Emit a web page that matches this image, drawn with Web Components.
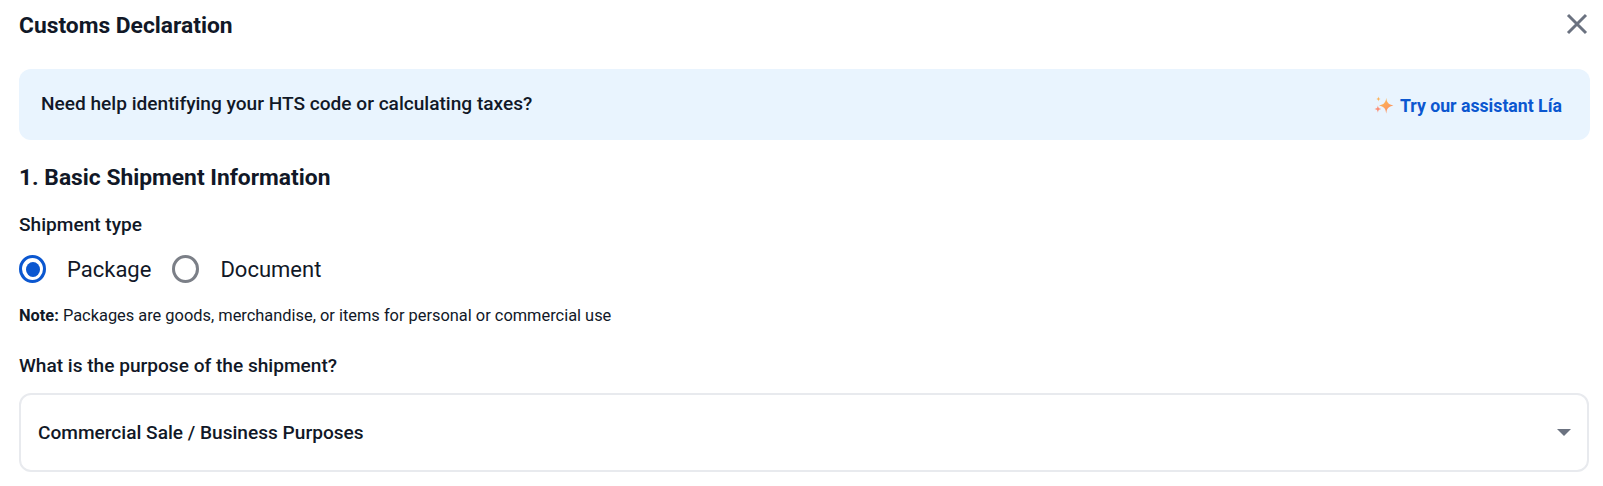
<!DOCTYPE html>
<html>
<head>
<meta charset="utf-8">
<style>
html, body { margin: 0; background: #fff; }
body { font-family: Roboto, "Liberation Sans", sans-serif; color: #111827; overflow: hidden; }
</style>
</head>
<body>
<customs-dialog>
    <dialog-header>Customs Declaration</dialog-header>
    <help-banner>Need help identifying your HTS code or calculating taxes?</help-banner>
    <section-title>1. Basic Shipment Information</section-title>
    <field-label>Shipment type</field-label>
    <radio-group>
        <radio-option checked>Package</radio-option>
        <radio-option>Document</radio-option>
    </radio-group>
    <shipment-note><b>Note:</b> Packages are goods, merchandise, or items for personal or commercial use</shipment-note>
    <field-label style="--label-top: 29px">What is the purpose of the shipment?</field-label>
    <select-box>Commercial Sale / Business Purposes</select-box>
</customs-dialog>

<script>
class CustomsDialog extends HTMLElement {
    constructor() {
        super();
        this.attachShadow({ mode: 'open' }).innerHTML = `
        <style>
        :host { display: flex; flex-direction: column; padding: 0 13px 0 19px; height: 486px; box-sizing: border-box; }
        </style>
        <slot></slot>`;
    }
}

class DialogHeader extends HTMLElement {
    constructor() {
        super();
        this.attachShadow({ mode: 'open' }).innerHTML = `
        <style>
        :host { display: flex; justify-content: space-between; align-items: center; height: 50px; margin-bottom: 19px; }
        h1 { margin: 0; font-size: 22.8px; font-weight: 700; color: #111827; }
        svg { display: block; margin-right: 2px; margin-top: -2px; }
        </style>
        <h1><slot></slot></h1>
        <svg width="22" height="22" viewBox="0 0 22 22" fill="none" stroke="#6b7280" stroke-width="3">
            <path d="M2 2 L20 20 M20 2 L2 20"/>
        </svg>`;
    }
}

class HelpBanner extends HTMLElement {
    constructor() {
        super();
        this.attachShadow({ mode: 'open' }).innerHTML = `
        <style>
        :host { display: flex; justify-content: space-between; align-items: center; height: 71px; padding: 0 28px 0 22px; background: #e9f4fe; border-radius: 12px; box-sizing: border-box; }
        .text { font-size: 19.1px; font-weight: 500; color: #111827; margin-top: -3px; }
        a { display: flex; align-items: center; gap: 6px; font-size: 17.7px; font-weight: 700; color: #0b57d0; text-decoration: none; margin-top: 2px; }
        svg { display: block; }
        </style>
        <span class="text"><slot></slot></span>
        <a href="#">
            <svg width="20" height="20" viewBox="0 0 18 18">
                <defs>
                    <linearGradient id="spark" x1="0" y1="0" x2="0.6" y2="1">
                        <stop offset="0" stop-color="#fdc04a"/>
                        <stop offset="1" stop-color="#fb8f68"/>
                    </linearGradient>
                </defs>
                <path fill="url(#spark)" d="M11 1.5 C11.5 6 13 7.5 17.5 8.5 C13 9.5 11.5 11 11 16 C10.5 11 9 9.5 4.5 8.5 C9 7.5 10.5 6 11 1.5Z"/>
                <path fill="#fbb45c" d="M4 0.5 C4.2 2 4.7 2.5 6 2.8 C4.7 3.1 4.2 3.6 4 5 C3.8 3.6 3.3 3.1 2 2.8 C3.3 2.5 3.8 2 4 0.5Z"/>
                <path fill="#fb8f78" d="M3.5 8.5 C3.8 10.6 4.4 11.2 6.5 11.7 C4.4 12.2 3.8 12.8 3.5 15 C3.2 12.8 2.6 12.2 0.5 11.7 C2.6 11.2 3.2 10.6 3.5 8.5Z"/>
            </svg>
            <span>Try our assistant Lía</span>
        </a>`;
    }
}

class SectionTitle extends HTMLElement {
    constructor() {
        super();
        this.attachShadow({ mode: 'open' }).innerHTML = `
        <style>
        :host { display: block; margin-top: 24px; font-size: 22.8px; font-weight: 700; line-height: 28px; color: #111827; }
        </style>
        <slot></slot>`;
    }
}

class FieldLabel extends HTMLElement {
    constructor() {
        super();
        this.attachShadow({ mode: 'open' }).innerHTML = `
        <style>
        :host { display: block; margin-top: var(--label-top, 22px); font-size: 19.1px; font-weight: 500; line-height: 22px; color: #111827; }
        </style>
        <slot></slot>`;
    }
}

class RadioGroup extends HTMLElement {
    constructor() {
        super();
        this.attachShadow({ mode: 'open' }).innerHTML = `
        <style>
        :host { display: flex; align-items: center; gap: 21px; margin-top: 19px; height: 28px; }
        </style>
        <slot></slot>`;
    }
}

class RadioOption extends HTMLElement {
    constructor() {
        super();
        this.attachShadow({ mode: 'open' }).innerHTML = `
        <style>
        :host { display: inline-flex; align-items: center; gap: 21px; font-size: 22px; color: #111827; }
        .ring { display: flex; align-items: center; justify-content: center; width: 27px; height: 28px; box-sizing: border-box; border: 3px solid #7b7f87; border-radius: 50%; }
        :host([checked]) .ring { border-color: #0b57d0; }
        :host([checked]) .ring::after { content: ''; width: 14px; height: 15px; border-radius: 50%; background: #0b57d0; }
        </style>
        <span class="ring"></span>
        <span><slot></slot></span>`;
    }
}

class ShipmentNote extends HTMLElement {
    constructor() {
        super();
        this.attachShadow({ mode: 'open' }).innerHTML = `
        <style>
        :host { display: block; margin-top: 23px; font-size: 16.4px; line-height: 20px; color: #111827; }
        </style>
        <slot></slot>`;
    }
}

class SelectBox extends HTMLElement {
    constructor() {
        super();
        this.attachShadow({ mode: 'open' }).innerHTML = `
        <style>
        :host { display: flex; justify-content: space-between; align-items: center; height: 79px; margin-top: 16px; margin-right: 1px; padding: 0 16px 0 17px; box-sizing: border-box; border: 2px solid #e8eaee; border-radius: 12px; font-size: 19.1px; font-weight: 500; color: #111827; }
        svg { display: block; }
        </style>
        <span><slot></slot></span>
        <svg width="14" height="7" viewBox="0 0 14 7"><path fill="#6b7280" d="M0 0 H14 L7 7Z"/></svg>`;
    }
}

customElements.define('customs-dialog', CustomsDialog);
customElements.define('dialog-header', DialogHeader);
customElements.define('help-banner', HelpBanner);
customElements.define('section-title', SectionTitle);
customElements.define('field-label', FieldLabel);
customElements.define('radio-group', RadioGroup);
customElements.define('radio-option', RadioOption);
customElements.define('shipment-note', ShipmentNote);
customElements.define('select-box', SelectBox);
</script>
</body>
</html>
